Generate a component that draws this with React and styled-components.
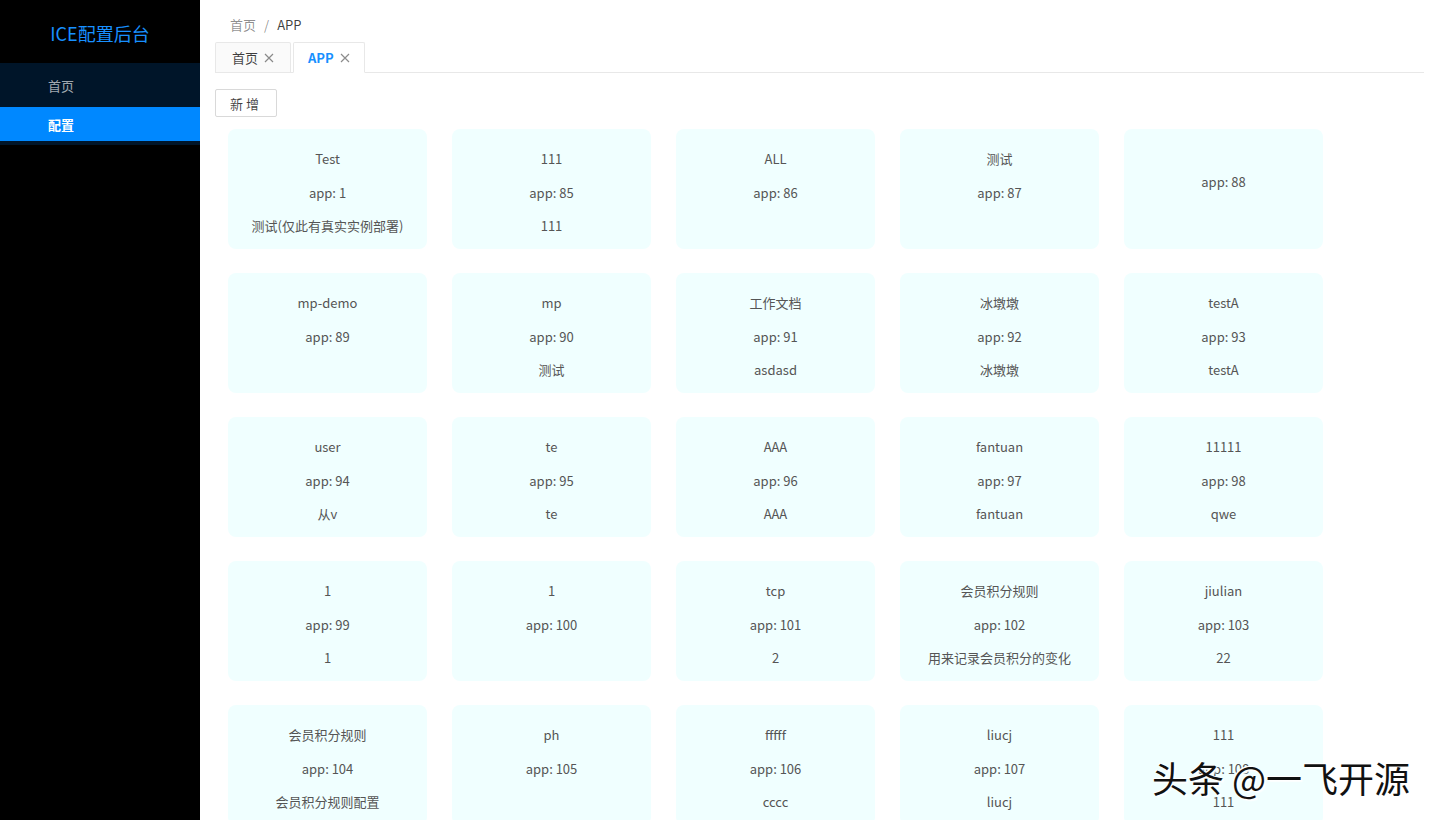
import React from 'react';
import styled, { createGlobalStyle } from 'styled-components';

const GlobalStyle = createGlobalStyle`
  html, body {
    margin: 0;
    padding: 0;
    height: 100%;
    overflow: hidden;
  }
  body {
    font-family: "Noto Sans CJK SC", "Noto Sans", "Liberation Sans", sans-serif;
    font-size: 13px;
    color: rgba(0, 0, 0, 0.65);
  }
`;

const Layout = styled.div`
  display: flex;
  height: 100vh;
  position: relative;
  overflow: hidden;
`;

const Sider = styled.aside`
  width: 200px;
  flex-shrink: 0;
  background: #000;
  display: flex;
  flex-direction: column;
`;

const Logo = styled.div`
  height: 63px;
  display: flex;
  align-items: center;
  justify-content: center;
  color: #1890ff;
  font-size: 18px;
  padding-top: 2px;
  box-sizing: border-box;
`;

const Menu = styled.ul`
  list-style: none;
  margin: 0;
  padding: 0 0 4px;
  background: #001529;
`;

const MenuItem = styled.li`
  height: ${(p) => (p.$active ? 34 : 44)}px;
  display: flex;
  align-items: center;
  padding-left: 48px;
  box-sizing: border-box;
  font-size: 13px;
  background: ${(p) => (p.$active ? '#0088ff' : 'transparent')};
  color: ${(p) => (p.$active ? '#fff' : 'rgba(255, 255, 255, 0.65)')};
  font-weight: ${(p) => (p.$active ? 700 : 400)};
`;

const Main = styled.main`
  flex: 1;
  padding: 13px 15px 0 15px;
  background: #fff;
  overflow: hidden;
`;

const Breadcrumb = styled.div`
  display: flex;
  gap: 8px;
  padding-left: 15px;
  height: 22px;
  align-items: center;
  font-size: 13px;
`;

const Crumb = styled.span`
  color: ${(p) => (p.$current ? 'rgba(0, 0, 0, 0.75)' : 'rgba(0, 0, 0, 0.45)')};
`;

const TabBar = styled.div`
  display: flex;
  align-items: flex-end;
  gap: 2px;
  margin-top: 6px;
  border-bottom: 1px solid #e8e8e8;
  height: 31px;
`;

const Tab = styled.div`
  display: flex;
  align-items: center;
  gap: 6px;
  height: ${(p) => (p.$active ? 31 : 30)}px;
  padding: 0 ${(p) => (p.$active ? 14 : 16)}px;
  box-sizing: border-box;
  border: 1px solid #e8e8e8;
  border-bottom: ${(p) => (p.$active ? '1px solid #fff' : '0')};
  margin-bottom: ${(p) => (p.$active ? -1 : 0)}px;
  border-radius: 2px 2px 0 0;
  background: ${(p) => (p.$active ? '#fff' : '#fafafa')};
  color: ${(p) => (p.$active ? '#1890ff' : 'rgba(0, 0, 0, 0.75)')};
  font-weight: ${(p) => (p.$active ? 700 : 400)};
  font-size: 13px;
`;

const Close = styled.svg`
  width: 10px;
  height: 10px;
  stroke: rgba(0, 0, 0, 0.45);
  stroke-width: 1.2;
`;

const Toolbar = styled.div`
  padding-top: 16px;
`;

const Button = styled.button`
  height: 28px;
  padding: 0 14px;
  border: 1px solid #d9d9d9;
  border-radius: 2px;
  background: #fff;
  font-family: inherit;
  font-size: 13px;
  color: rgba(0, 0, 0, 0.75);
  letter-spacing: 3px;
`;

const Grid = styled.div`
  display: grid;
  grid-template-columns: repeat(5, 199px);
  column-gap: 25px;
  row-gap: 24px;
  padding: 12px 0 0 13px;
`;

const Card = styled.div`
  height: 120px;
  box-sizing: border-box;
  background: #f0ffff;
  border-radius: 8px;
  padding-top: 20px;
  display: flex;
  flex-direction: column;
  align-items: center;
  gap: 13.5px;
`;

const Line = styled.div`
  height: ${(p) => (p.$empty ? 9.5 : 20)}px;
  line-height: 20px;
  font-size: 13px;
  color: #555;
  white-space: nowrap;
`;

const Watermark = styled.div`
  position: absolute;
  left: 1152px;
  top: 751px;
  font-size: 36px;
  color: #111;
  text-shadow: 1px 1px 0 #fff, -1px -1px 0 #fff, 2px 2px 1px rgba(255, 255, 255, 0.8);
  pointer-events: none;
  white-space: nowrap;
`;

const apps = [
  ['Test', 1, '测试(仅此有真实实例部署)'],
  ['111', 85, '111'],
  ['ALL', 86, ''],
  ['测试', 87, ''],
  ['', 88, ''],
  ['mp-demo', 89, ''],
  ['mp', 90, '测试'],
  ['工作文档', 91, 'asdasd'],
  ['冰墩墩', 92, '冰墩墩'],
  ['testA', 93, 'testA'],
  ['user', 94, '从v'],
  ['te', 95, 'te'],
  ['AAA', 96, 'AAA'],
  ['fantuan', 97, 'fantuan'],
  ['11111', 98, 'qwe'],
  ['1', 99, '1'],
  ['1', 100, ''],
  ['tcp', 101, '2'],
  ['会员积分规则', 102, '用来记录会员积分的变化'],
  ['jiulian', 103, '22'],
  ['会员积分规则', 104, '会员积分规则配置'],
  ['ph', 105, ''],
  ['fffff', 106, 'cccc'],
  ['liucj', 107, 'liucj'],
  ['111', 108, '111'],
];

const CloseIcon = () => (
  <Close viewBox="0 0 10 10" fill="none">
    <path d="M1 1 L9 9 M9 1 L1 9" />
  </Close>
);

export default function App() {
  return (
    <>
      <GlobalStyle />
      <Layout>
        <Sider>
          <Logo>ICE配置后台</Logo>
          <Menu>
            <MenuItem>首页</MenuItem>
            <MenuItem $active>配置</MenuItem>
          </Menu>
        </Sider>
        <Main>
          <Breadcrumb>
            <Crumb>首页</Crumb>
            <Crumb>/</Crumb>
            <Crumb $current>APP</Crumb>
          </Breadcrumb>
          <TabBar>
            <Tab>
              首页
              <CloseIcon />
            </Tab>
            <Tab $active>
              APP
              <CloseIcon />
            </Tab>
          </TabBar>
          <Toolbar>
            <Button>新增</Button>
          </Toolbar>
          <Grid>
            {apps.map(([name, id, desc]) => (
              <Card key={id}>
                {name ? <Line>{name}</Line> : <Line $empty />}
                <Line>app: {id}</Line>
                {desc && <Line>{desc}</Line>}
              </Card>
            ))}
          </Grid>
        </Main>
        <Watermark>头条 @一飞开源</Watermark>
      </Layout>
    </>
  );
}
